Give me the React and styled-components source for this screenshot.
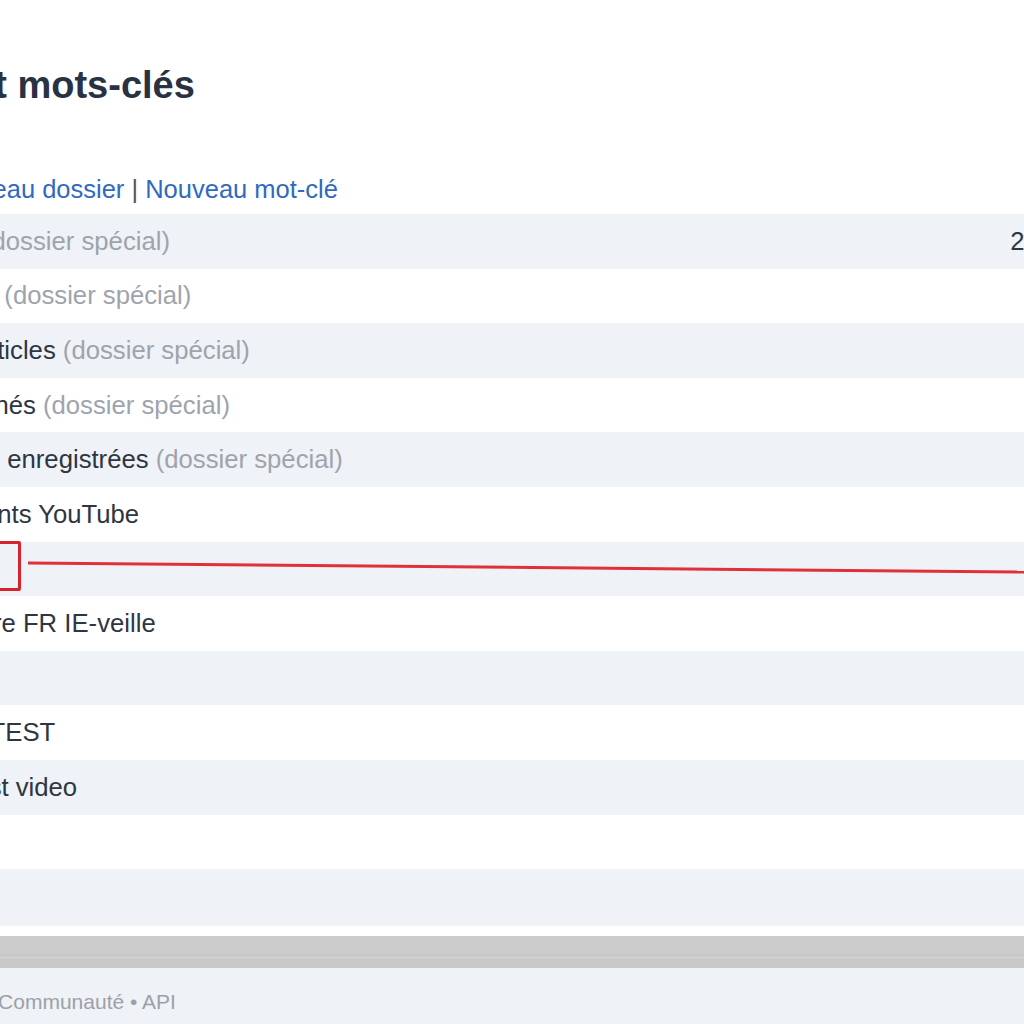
import React from 'react';
import styled, { createGlobalStyle } from 'styled-components';

const Global = createGlobalStyle`
  html, body {
    margin: 0;
    padding: 0;
    overflow: hidden;
    background: #ffffff;
  }
  body {
    font-family: "Liberation Sans", Arial, sans-serif;
    color: #2e3642;
  }
`;

const Page = styled.div`
  position: relative;
  width: 1260px;
  margin-left: -187px;
  padding-top: 62px;
`;

const Title = styled.h1`
  margin: 0 0 0 -11px;
  font-size: 38px;
  line-height: 46px;
  font-weight: bold;
  color: #283243;
`;

const Actions = styled.div`
  margin-top: 66px;
  padding-left: 120px;
  font-size: 25.5px;
  line-height: 30px;
  color: #555;
`;

const Link = styled.a`
  color: #2f6ac0;
  text-decoration: none;
`;

const List = styled.div`
  margin-top: 10px;
  display: flex;
  flex-direction: column;
`;

const Row = styled.div`
  display: grid;
  grid-template-columns: 1fr 60px;
  align-items: center;
  height: 54.6px;
  padding: 0 20px 0 60px;
  background: ${p => (p.$odd ? '#eff2f6' : '#ffffff')};
  font-size: 25.7px;
`;

const Label = styled.span`
  white-space: nowrap;
  color: #2e3642;
`;

const Special = styled.span`
  color: #9ea4ac;
`;

const Count = styled.span`
  text-align: right;
  color: ${p => (p.$faint ? '#e6e8eb' : '#2e3642')};
`;

const Gap = styled.div`
  height: 10px;
  background: #ffffff;
  border-top: 2px solid #f3f4f6;
`;

const Bar = styled.div`
  height: 32px;
  background: linear-gradient(
    #cccccc 0,
    #cccccc 18px,
    #c6c6c6 18px,
    #c6c6c6 20px,
    #d0d0d0 20px,
    #d0d0d0 23px,
    #c8c8c8 23px,
    #c8c8c8 32px
  );
`;

const Footer = styled.footer`
  height: 68px;
  display: flex;
  align-items: center;
  padding-left: 63px;
  background: #eff2f6;
  font-size: 21px;
  color: #9ba1a8;
`;

const Marker = styled.div`
  position: absolute;
  left: 120px;
  top: 541px;
  width: 88px;
  height: 50px;
  box-sizing: border-box;
  border: 3px solid #d6232d;
  border-radius: 2px;
`;

const Arrow = styled.svg`
  position: absolute;
  left: 187px;
  top: 555px;
  width: 1024px;
  height: 24px;
  overflow: visible;
`;

const rows = [
  { label: 'Partagés', special: true, count: '245' },
  { label: 'Articles lus', special: true },
  { label: 'Tous les articles', special: true },
  { label: 'Sites abonnés', special: true, count: '3', faint: true },
  { label: 'Pages web enregistrées', special: true, count: '3', faint: true },
  { label: 'Abonnements YouTube' },
  { label: 'Blogs' },
  { label: 'La littérature FR IE-veille' },
  { label: 'Sport' },
  { label: 'Mots-clés TEST' },
  { label: 'Dossier test video' },
  { label: 'Culture' },
  { label: 'Divers' },
];

export default function App() {
  return (
    <>
      <Global />
      <Page>
        <Title>Dossiers et mots-clés</Title>
        <Actions>
          <Link href="#">Nouveau dossier</Link> | <Link href="#">Nouveau mot-clé</Link>
        </Actions>
        <List>
          {rows.map((r, i) => (
            <Row key={r.label} $odd={i % 2 === 0}>
              <Label>
                {r.label}
                {r.special && <Special> (dossier spécial)</Special>}
              </Label>
              <Count $faint={r.faint}>{r.count}</Count>
            </Row>
          ))}
        </List>
        <Gap />
        <Bar />
        <Footer>Aide • Blog • Communauté • API</Footer>
        <Marker />
        <Arrow viewBox="0 0 1024 24">
          <line x1="28" y1="8" x2="1024" y2="17" stroke="#e0303a" strokeWidth="3" />
        </Arrow>
      </Page>
    </>
  );
}
